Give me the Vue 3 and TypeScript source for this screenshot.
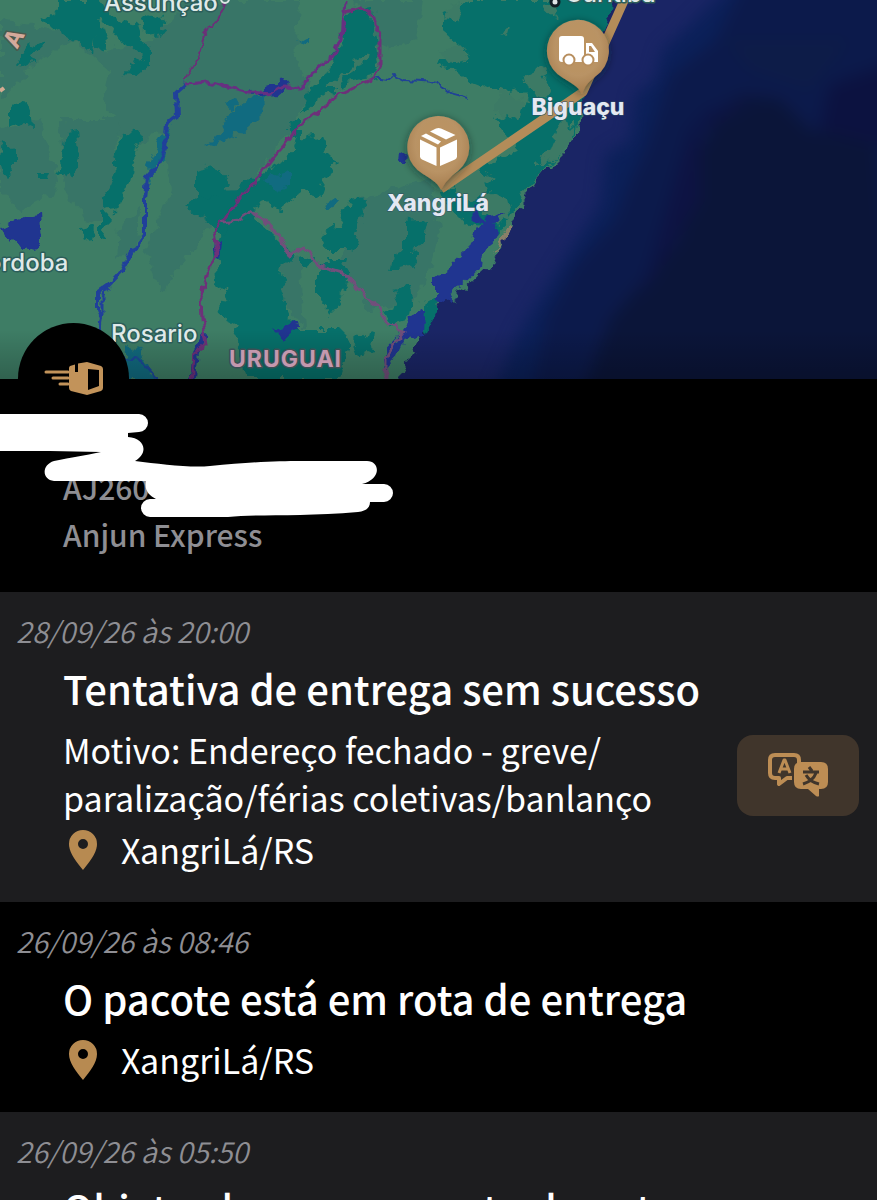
<script setup lang="ts">
interface TrackingEvent {
  date: string
  title: string
  description?: string
  place?: string
}

const parcel = { code: 'AJ260', carrier: 'Anjun Express' }

const events: TrackingEvent[] = [
  {
    date: '28/09/26 às 20:00',
    title: 'Tentativa de entrega sem sucesso',
    description: 'Motivo: Endereço fechado - greve/\nparalização/férias coletivas/banlanço',
    place: 'XangriLá/RS',
  },
  { date: '26/09/26 às 08:46', title: 'O pacote está em rota de entrega', place: 'XangriLá/RS' },
  { date: '26/09/26 às 05:50', title: 'Objeto chegou no ponto de entrega' },
]

const midPatches = [
  'M0 20 60 30 110 50 150 40 190 0 300 0 297 60 310 90 290 130 245 190 210 230 160 290 145 250 170 190 160 130 125 150 105 100 110 70 70 40 40 60 0 100Z',
  'M60 120 120 120 110 210 90 225 65 190Z',
  'M350 0 420 0 415 40 380 50 360 20Z',
  'M350 200 430 180 440 230 420 300 370 310 340 260Z',
  'M0 130 40 120 60 190 20 210 0 190Z',
  'M280 260 300 255 305 330 285 300Z',
  'M120 225 140 210 138 240 118 262Z',
]

const tealPatches = [
  'M60 0 100 0 105 10 130 25 137 20 142 35 150 50 150 65 136 77 123 75 130 62 143 58 135 48 122 42 110 25 99 18 106 45 97 50 95 38 93 53 80 45 60 33 44 20 60 12Z',
  'M143 20 160 15 167 35 155 38 145 30Z',
  'M22 52 45 40 42 48 34 55 36 62 22 70 16 62Z',
  'M8 110 28 102 34 118 35 128 20 122 8 127Z',
  'M65 132 78 130 80 155 72 178 55 172 62 155Z',
  'M124 132 141 134 136 150 128 182 118 210 105 212 106 196 116 170 112 165Z',
  'M2 140 14 150 14 170 6 178 0 160Z',
  'M38 172 48 172 46 180 38 180Z',
  'M78 230 95 226 93 239 82 241Z',
  'M100 212 108 215 106 242 100 240Z',
  'M345 12 373 10 375 35 379 60 372 78 345 84 320 100 302 114 303 92 322 80 336 52 342 35Z',
  'M445 12 470 0 615 0 600 35 588 90 576 108 574 135 553 160 540 175 523 195 508 220 494 235 482 225 465 222 450 205 440 190 475 187 480 165 500 158 520 150 495 120 510 112 530 100 518 88 500 92 470 80 438 65 440 60 470 55 447 35Z',
  'M295 140 322 134 325 150 338 163 330 170 320 198 295 190 285 168Z',
  'M250 180 285 160 300 160 300 195 280 210 262 200 248 220 228 240 185 205 200 192 240 190Z',
  'M225 225 250 215 270 232 295 255 280 270 290 320 300 330 340 330 350 340 350 350 340 379 250 379 235 340 240 325 220 316 218 305 230 300 218 280 216 250Z',
  'M318 265 345 262 350 280 340 300 330 315 318 302Z',
  'M348 200 366 198 360 225 352 250 326 250 320 238 340 225Z',
  'M405 222 430 220 424 245 412 250 418 263 392 270 395 255 405 250Z',
  'M395 290 410 286 412 302 408 320 390 325 384 312 398 303Z',
  'M364 333 374 330 372 350 358 358 352 343Z',
  'M425 300 440 292 437 312 426 333 421 323Z',
  'M195 170 215 166 230 182 220 198 195 195Z',
  'M288 120 300 118 300 140 290 138Z',
  'M300 258 312 256 310 268 300 266Z',
  'M328 258 348 258 345 268 330 268Z',
]

const greenPatches = [
  'M440 50 464 46 468 60 450 64Z',
  'M448 8 462 2 458 20 446 22Z',
  'M526 75 540 68 550 88 545 97 530 92Z',
  'M498 88 522 100 517 122 498 112Z',
  'M466 163 492 178 477 202 453 194Z',
  'M355 62 368 52 366 60 345 75 340 88 325 88 345 72Z',
  'M534 165 548 155 562 118 573 126 570 143 546 165Z',
  'M483 190 505 195 511 218 498 225 485 215Z',
  'M500 32 510 28 508 36Z',
  'M538 4 560 2 553 20Z',
]

const lakePatches = [
  'M232 110 250 98 266 96 267 108 250 125 235 138 205 147 215 140Z',
  'M226 104 236 96 238 104 230 109Z',
  'M260 180 290 170 290 185 275 192Z',
  'M322 205 335 196 340 203 330 208Z',
  'M296 45 308 38 304 48Z',
  'M125 345 140 350 150 375 158 379 128 379Z',
  'M158 140 168 125 164 155 150 185 148 165Z',
]

const waterPatches = [
  'M0 225 22 218 42 214 44 240 36 250 17 247Z',
  'M505 214 485 219 474 233 469 248 448 268 434 280 434 302 447 304 460 288 479 270 480 254 493 244 499 220Z',
  'M472 205 482 215 484 224 477 222Z',
  'M418 308 425 310 424 335 404 340 392 365 386 372 382 355 400 335Z',
  'M250 92 270 86 283 79 288 86 278 95 263 97Z',
  'M272 330 298 322 300 332 282 340Z',
  'M401 152 406 150 405 162 400 162Z',
]
</script>

<template>
  <main class="screen">
    <section class="map" aria-label="Mapa do trajeto">
      <svg class="map-art" viewBox="0 0 877 379" preserveAspectRatio="xMidYMin slice">
        <defs>
          <filter id="rough" x="-5%" y="-5%" width="110%" height="110%" color-interpolation-filters="sRGB">
            <feTurbulence type="fractalNoise" baseFrequency="0.08" numOctaves="3" seed="4" />
            <feDisplacementMap in="SourceGraphic" scale="16" xChannelSelector="R" yChannelSelector="G" />
          </filter>
          <filter id="wiggle" x="-5%" y="-5%" width="110%" height="110%" color-interpolation-filters="sRGB">
            <feTurbulence type="fractalNoise" baseFrequency="0.12" numOctaves="2" seed="9" />
            <feDisplacementMap in="SourceGraphic" scale="8" xChannelSelector="R" yChannelSelector="G" />
          </filter>
          <filter id="soft" x="-20%" y="-20%" width="140%" height="140%" color-interpolation-filters="sRGB">
            <feGaussianBlur stdDeviation="8" />
          </filter>
          <filter id="shade" x="-40%" y="-40%" width="180%" height="180%">
            <feDropShadow dx="0" dy="2" stdDeviation="4" flood-color="#06201c" flood-opacity="0.55" />
          </filter>
          <radialGradient id="pin" cx="50%" cy="38%" r="62%">
            <stop offset="0" stop-color="#bd935e" />
            <stop offset="0.6" stop-color="#b99365" />
            <stop offset="1" stop-color="#a57c4d" />
          </radialGradient>
          <linearGradient id="edge" x1="0" y1="0" x2="0" y2="1">
            <stop offset="0" stop-color="#000" stop-opacity="0" />
            <stop offset="1" stop-color="#000" stop-opacity="0.22" />
          </linearGradient>
        </defs>

        <rect width="877" height="379" fill="#1a2565" />
        <g filter="url(#soft)">
          <path d="M735-20 690 25 662 50 655 80 635 95 630 140 605 155 600 205 570 250 545 290 520 330 490 400 900 400 900-20Z" fill="#0b2059" />
          <path d="M745-20 715 40 670 75 655 120 645 150 630 180 615 220 575 265 545 320 530 400 900 400 900-20Z" fill="#0c1a4b" />
          <path d="M745 95 780 100 810 130 877 140 900 400 580 400 610 320 680 240 700 150 725 105Z" fill="#0b1539" />
          <path d="M830 85 900 60 900 150 820 130Z" fill="#0c1240" />
          <path d="M710 110 760 100 700 130 700 200 640 300 690 130Z" fill="#0d1343" />
          <path d="M725 40 850 40 810 90 750 70Z" fill="#0d1c48" />
        </g>

        <g filter="url(#rough)">
          <path d="M-20-20 620-20 603 10 584 24 579 95 576 135 568 148 544 172 528 192 511 228 494 262 464 290 441 304 428 325 416 345 388 400-20 400Z" fill="#3e7d65" />
          <g fill="#387567"><path v-for="d in midPatches" :key="d" :d="d" /></g>
          <g fill="#06706a"><path v-for="d in tealPatches" :key="d" :d="d" /></g>
          <g fill="#3c7a65"><path v-for="d in greenPatches" :key="d" :d="d" /></g>
          <g fill="#116b80"><path v-for="d in lakePatches" :key="d" :d="d" /></g>
          <g fill="#203590"><path v-for="d in waterPatches" :key="d" :d="d" /></g>
          <path d="M448 294 458 289 453 300Z" fill="#3b7868" />
          <path d="M506 228 512 226 505 243 495 253Z" fill="#887f68" />
        </g>

        <g filter="url(#wiggle)" fill="none" stroke-linejoin="round">
          <path d="M186 84 176 93 177 116 167 124 165 148 159 165 147 178 145 200 145 235 133 250 122 270 108 285 98 292 98 310 102 318 100 330" stroke="#20409a" stroke-width="4" />
          <path d="M108 287 103 296 103 316" stroke="#20409a" stroke-width="3" />
          <path d="M124 358 142 360 158 379" stroke="#1c489a" stroke-width="2" />
          <path d="M374 78 388 80 394 75 404 80 424 81 437 83 450 93 468 98" stroke="#204296" stroke-width="2" />
          <path d="M218 242 216 258M206 334 196 352 192 385" stroke="#203590" stroke-width="6" />
          <path d="M228 0 217 20 204 34 200 55 184 81" stroke="#6c2f78" stroke-width="2" />
          <path d="M186 84 208 82 228 87 250 92 270 94 284 86 300 89 305 82 315 70 334 55 342 38 345 0" stroke="#673081" stroke-width="3" />
          <path d="M345 12 362 8 374 18 380 38 380 66 373 78 356 87 337 96 320 110 298 127 290 138 270 162 250 188 240 198 224 220 214 232 217 250 209 270 201 295 202 320 206 345 194 353 192 385" stroke="#6d3179" stroke-width="3" />
          <path d="M222 222 238 220 250 212 264 220 280 238 290 256 304 246 318 266 345 274 366 297 378 305 384 320 404 332 392 348 386 358 386 385" stroke="#714f7b" stroke-width="3" />
        </g>
        <rect y="330" width="877" height="49" fill="url(#edge)" />

        <path d="M441 189 583 92 627-6" fill="none" stroke="#b38c59" stroke-width="9" stroke-linejoin="round" />

        <g class="city">
          <text x="104" y="11">Assunção</text>
          <text x="-13" y="271">órdoba</text>
          <text x="111" y="342">Rosario</text>
          <text x="565" y="2">Curitiba</text>
        </g>
        <circle cx="225" cy="-1" r="4" fill="#44746d" stroke="#dbe5e4" stroke-width="2" />
        <circle cx="555" cy="2" r="4" fill="#dfe4e6" stroke="#111c24" stroke-width="3" />
        <text class="country" x="229" y="367">URUGUAI</text>
        <text class="region" x="17" y="50" transform="rotate(-62 17 50)">A</text>
        <path d="M0 91 4 88" stroke="#d4aa91" stroke-width="4" />

        <g filter="url(#shade)">
          <path d="M441 190C437 182 431 179 423 174A31 31 0 1 1 458 171C449 178 445 182 441 190Z" fill="url(#pin)" />
          <path d="M582 94C578 86 571 83 563 78A31 31 0 1 1 596 76C588 82 585 86 582 94Z" fill="url(#pin)" />
        </g>
        <g fill="#fff">
          <path d="M420 139.500 436.500 147.500V166L422 159.500Q420 158.500 420 156.500Z" />
          <path d="M457 139.500 440 147.500V166L455 159.500Q457 158.500 457 156.500Z" />
          <path d="M421 136 426 133.500 441 141.500 438 144.500Z" />
          <path d="M430 131.500 436 128.500Q438.500 127.500 441 128.500L455.500 135 446 139.500Z" />
        </g>
        <g>
          <path d="M562 36H581Q584 36 584 39V62H562Q559 62 559 59V39Q559 36 562 36ZM586 43H592L598 51V62H586Z" fill="#fff" />
          <path d="M589 46H591L595 52H589Z" fill="#b78e5e" />
          <g fill="#fff" stroke="#b78e5e" stroke-width="2"><circle cx="569" cy="60" r="5.500" /><circle cx="588" cy="60" r="5.500" /></g>
        </g>
        <g class="stop">
          <text x="438" y="211">XangriLá</text>
          <text x="578" y="115">Biguaçu</text>
        </g>
      </svg>
    </section>

    <header class="parcel">
      <span class="avatar">
        <svg viewBox="0 0 60 34" aria-hidden="true">
          <path d="M2 10H24M9 16H24M16 22H24" stroke="#c2935a" stroke-width="3" stroke-linecap="round" />
          <path fill="#c2935a" fill-rule="evenodd" d="M26 4 31 2.500V10H34V1.500L43 0 57 4Q59 5 59 7V26Q59 28 57 29L43 33 27 29Q25 28 25 26V6Q25 5 26 4ZM44 7V28L55 24V8Z" />
        </svg>
      </span>
      <p>{{ parcel.code }}</p>
      <p>{{ parcel.carrier }}</p>
      <svg class="redaction" viewBox="0 0 400 120" aria-hidden="true">
        <path fill="#fff" d="M0 14H139A9 9 0 0 1 139 32L128 33V37C145 38 149 53 135 61C160 64 190 68 210 66C250 62 280 61 300 61H367C380 61 382 79 362 84H384A9 9 0 0 1 384 102H370C370 108 366 111 358 112C300 117 255 114 228 117H150A9 9 0 0 1 150 99H156C149 96 144 90 146 81H54C42 80 41 65 54 61C72 57 84 56 101 52L50 51H0Z" />
      </svg>
    </header>

    <ol class="events">
      <li v-for="event in events" :key="event.date" class="event">
        <time class="date">{{ event.date }}</time>
        <div class="row">
          <div class="body">
            <h2>{{ event.title }}</h2>
            <p v-if="event.description" class="description">{{ event.description }}</p>
            <p v-if="event.place" class="place">
              <svg viewBox="0 0 30 42" aria-hidden="true">
                <path fill="#b78a51" fill-rule="evenodd" d="M15 1A14 14 0 0 0 1 15C1 24 8 32 15 41C22 32 29 24 29 15A14 14 0 0 0 15 1ZM15 10A5 5 0 1 1 15 20A5 5 0 1 1 15 10Z" />
              </svg>
              <span>{{ event.place }}</span>
            </p>
          </div>
          <button v-if="event.description" class="translate" type="button" aria-label="Traduzir">
            <svg viewBox="0 0 62 46" aria-hidden="true">
              <path d="M25 26H20L12 32V26H8Q3 26 3 21V8Q3 3 8 3H27Q32 3 32 8V11" fill="none" stroke="#bd8d54" stroke-width="4" stroke-linejoin="round" />
              <path d="M12 21 17 8H18L23 21M14 17H21" fill="none" stroke="#bd8d54" stroke-width="3" stroke-linejoin="round" />
              <path d="M34 10H54Q61 10 61 17V30Q61 37 54 37H52V44Q51 45 49 44L41 37H34Q27 37 27 30V17Q27 10 34 10Z" fill="#bd8d54" />
              <path d="M42 15 45 19M36 20H52M49 21Q46 29 36 32M39 23Q43 30 52 32" fill="none" stroke="#40352b" stroke-width="3" />
            </svg>
          </button>
        </div>
      </li>
    </ol>
  </main>
</template>

<style>
body {
  margin: 0;
  background: #000;
}
</style>

<style scoped>
.screen {
  display: flex;
  flex-direction: column;
  height: 100vh;
  overflow: hidden;
  background: #000;
  color: #fff;
  font-family: "Noto Sans CJK JP", "Noto Sans", sans-serif;
}

p,
h2,
ol {
  margin: 0;
  padding: 0;
}

.map {
  flex: none;
  aspect-ratio: 877 / 379;
}

.map-art {
  display: block;
  width: 100%;
  height: 100%;
}

.map-art text {
  font-family: Inter, "Liberation Sans", sans-serif;
  paint-order: stroke;
  stroke-linejoin: round;
}

.city text {
  fill: #dfe9e8;
  stroke: #2c5d5a;
  stroke-width: 3px;
  font-size: 24px;
  font-weight: 500;
}

.stop text {
  fill: #e3e8f2;
  stroke: #304f62;
  stroke-width: 1px;
  font-size: 23px;
  font-weight: 800;
  text-anchor: middle;
}

.country {
  fill: #c498ae;
  stroke: #3b4f55;
  stroke-width: 3px;
  font-size: 23px;
  font-weight: 700;
  letter-spacing: 1px;
}

.region {
  fill: #d4aa9b;
  stroke: #4a5a4e;
  stroke-width: 3px;
  font-size: 24px;
  font-weight: 700;
}

.parcel {
  position: relative;
  flex: none;
  padding: 85px 18px 34px 63px;
  color: #8e8e93;
  font-size: 30px;
  font-weight: 500;
  line-height: 47px;
}

.avatar {
  position: absolute;
  top: -56px;
  left: 18px;
  display: grid;
  place-items: center;
  width: 111px;
  height: 111px;
  border-radius: 50%;
  background: #000;
}

.avatar svg {
  width: 60px;
  height: 34px;
}

.redaction {
  position: absolute;
  top: 21px;
  left: 0;
  width: 400px;
  height: 120px;
}

.events {
  flex: 1;
  min-height: 0;
  overflow-y: auto;
  scrollbar-width: none;
  list-style: none;
}

.event {
  padding: 18px 18px 28px 16px;
  background: #000;
}

.event:nth-child(odd) {
  background: #1d1d1f;
}

.date {
  display: block;
  color: #8e8e93;
  font-size: 29px;
  font-style: italic;
  font-weight: 350;
  line-height: 40px;
}

.row {
  display: flex;
  align-items: center;
  justify-content: space-between;
  padding-left: 47px;
}

.body {
  flex: 1;
  min-width: 0;
}

h2 {
  margin: 8px 0;
  font-size: 40px;
  font-weight: 500;
  line-height: 60px;
  white-space: nowrap;
}

.description,
.place {
  font-size: 34px;
  font-weight: 400;
  line-height: 48px;
}

.description {
  margin-bottom: 4px;
  white-space: pre-line;
}

.place {
  display: flex;
  align-items: center;
  gap: 23px;
}

.place svg {
  width: 30px;
  height: 42px;
  margin-left: 5px;
}

.translate {
  display: grid;
  flex: none;
  place-items: center;
  width: 122px;
  height: 81px;
  margin-top: 26px;
  padding: 0;
  border: 0;
  border-radius: 16px;
  background: #40352b;
}

.translate svg {
  width: 62px;
  height: 46px;
}
</style>
